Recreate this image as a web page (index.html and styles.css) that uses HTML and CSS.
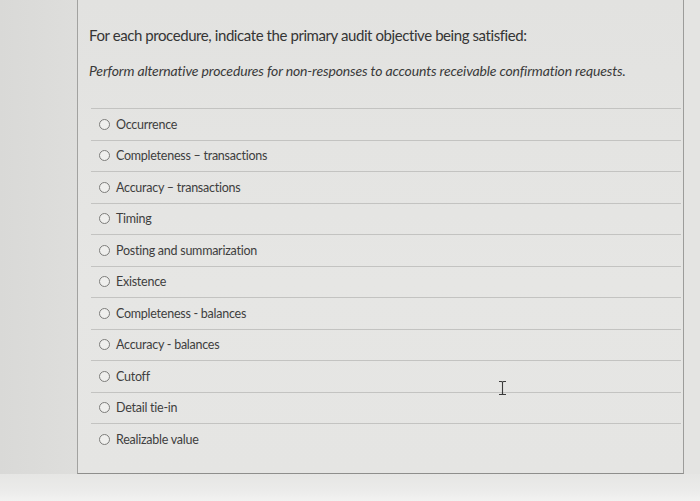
FILE: index.html
```html
<!DOCTYPE html>
<html lang="en">
<head>
<meta charset="utf-8">
<title>Audit objective question</title>
<link rel="stylesheet" href="styles.css">
</head>
<body>
<div class="screen">
  <div class="panel">
    <p class="prompt">For each procedure, indicate the primary audit objective being satisfied:</p>
    <p class="procedure">Perform alternative procedures for non-responses to accounts receivable confirmation requests.</p>
    <ul class="options">
      <li class="option"><span class="radio"></span><span class="label">Occurrence</span></li>
      <li class="option"><span class="radio"></span><span class="label">Completeness – transactions</span></li>
      <li class="option"><span class="radio"></span><span class="label">Accuracy – transactions</span></li>
      <li class="option"><span class="radio"></span><span class="label">Timing</span></li>
      <li class="option"><span class="radio"></span><span class="label">Posting and summarization</span></li>
      <li class="option"><span class="radio"></span><span class="label">Existence</span></li>
      <li class="option"><span class="radio"></span><span class="label">Completeness - balances</span></li>
      <li class="option"><span class="radio"></span><span class="label">Accuracy - balances</span></li>
      <li class="option"><span class="radio"></span><span class="label">Cutoff</span></li>
      <li class="option"><span class="radio"></span><span class="label">Detail tie-in</span></li>
      <li class="option"><span class="radio"></span><span class="label">Realizable value</span></li>
    </ul>
    <svg class="ibeam" width="9" height="16" viewBox="0 0 9 16" aria-hidden="true">
      <path d="M1 1.5h2.5M5.5 1.5H8M4.5 2v12M1 14.5h2.5M5.5 14.5H8M3.5 1.5q1 0 1 1M5.5 1.5q-1 0-1 1M3.5 14.5q1 0 1-1M5.5 14.5q-1 0-1-1" fill="none" stroke="#3a3a3a" stroke-width="1.1"/>
    </svg>
  </div>
  <div class="bottom-strip"></div>
</div>
</body>
</html>
```

FILE: styles.css
```css
html, body {
  margin: 0;
  padding: 0;
}

body {
  width: 700px;
  height: 501px;
  overflow: hidden;
  background: #dcdcda;
  font-family: Lato, "Open Sans", "Liberation Sans", sans-serif;
}

.screen {
  display: flex;
  flex-direction: column;
  height: 501px;
  background: linear-gradient(90deg, #d9d9d7 0, #dededc 77px, #e4e4e2 77px);
}

.panel {
  position: relative;
  box-sizing: border-box;
  margin-left: 77px;
  width: 607px;
  height: 474px;
  padding: 25px 0 0 11px;
  background: linear-gradient(180deg, #e2e2e0 0%, #e6e6e4 60%, #e5e5e3 100%);
  border-left: 1px solid #a2a2a0;
  border-right: 1px solid #9c9c9a;
  border-bottom: 1px solid #8e8e8c;
}

.prompt {
  margin: 0;
  font-size: 15px;
  line-height: 20px;
  color: #353535;
  letter-spacing: -0.42px;
}

.procedure {
  margin: 16px 0 0;
  font-size: 14px;
  line-height: 20px;
  font-style: italic;
  color: #3a3a3a;
  letter-spacing: -0.15px;
}

.options {
  list-style: none;
  margin: 27px 0 0;
  padding: 0;
  width: 592px;
}

.option {
  display: flex;
  align-items: center;
  gap: 6px;
  height: 31.5px;
  padding-left: 8px;
  border-top: 1px solid #c3c3c1;
  box-sizing: border-box;
  margin-left: 2px;
}

.radio {
  box-sizing: border-box;
  width: 11px;
  height: 11px;
  border-radius: 50%;
  border: 1px solid #7d7d7b;
  background: #efefed;
  flex: none;
}

.label {
  font-size: 12.5px;
  color: #3e3e3e;
  letter-spacing: -0.25px;
}

.ibeam {
  position: absolute;
  left: 420px;
  top: 380px;
}

.bottom-strip {
  flex: 1;
  background: linear-gradient(180deg, #e6e6e4 0, #ebebea 60%, #f2f2f1 100%);
}
```
